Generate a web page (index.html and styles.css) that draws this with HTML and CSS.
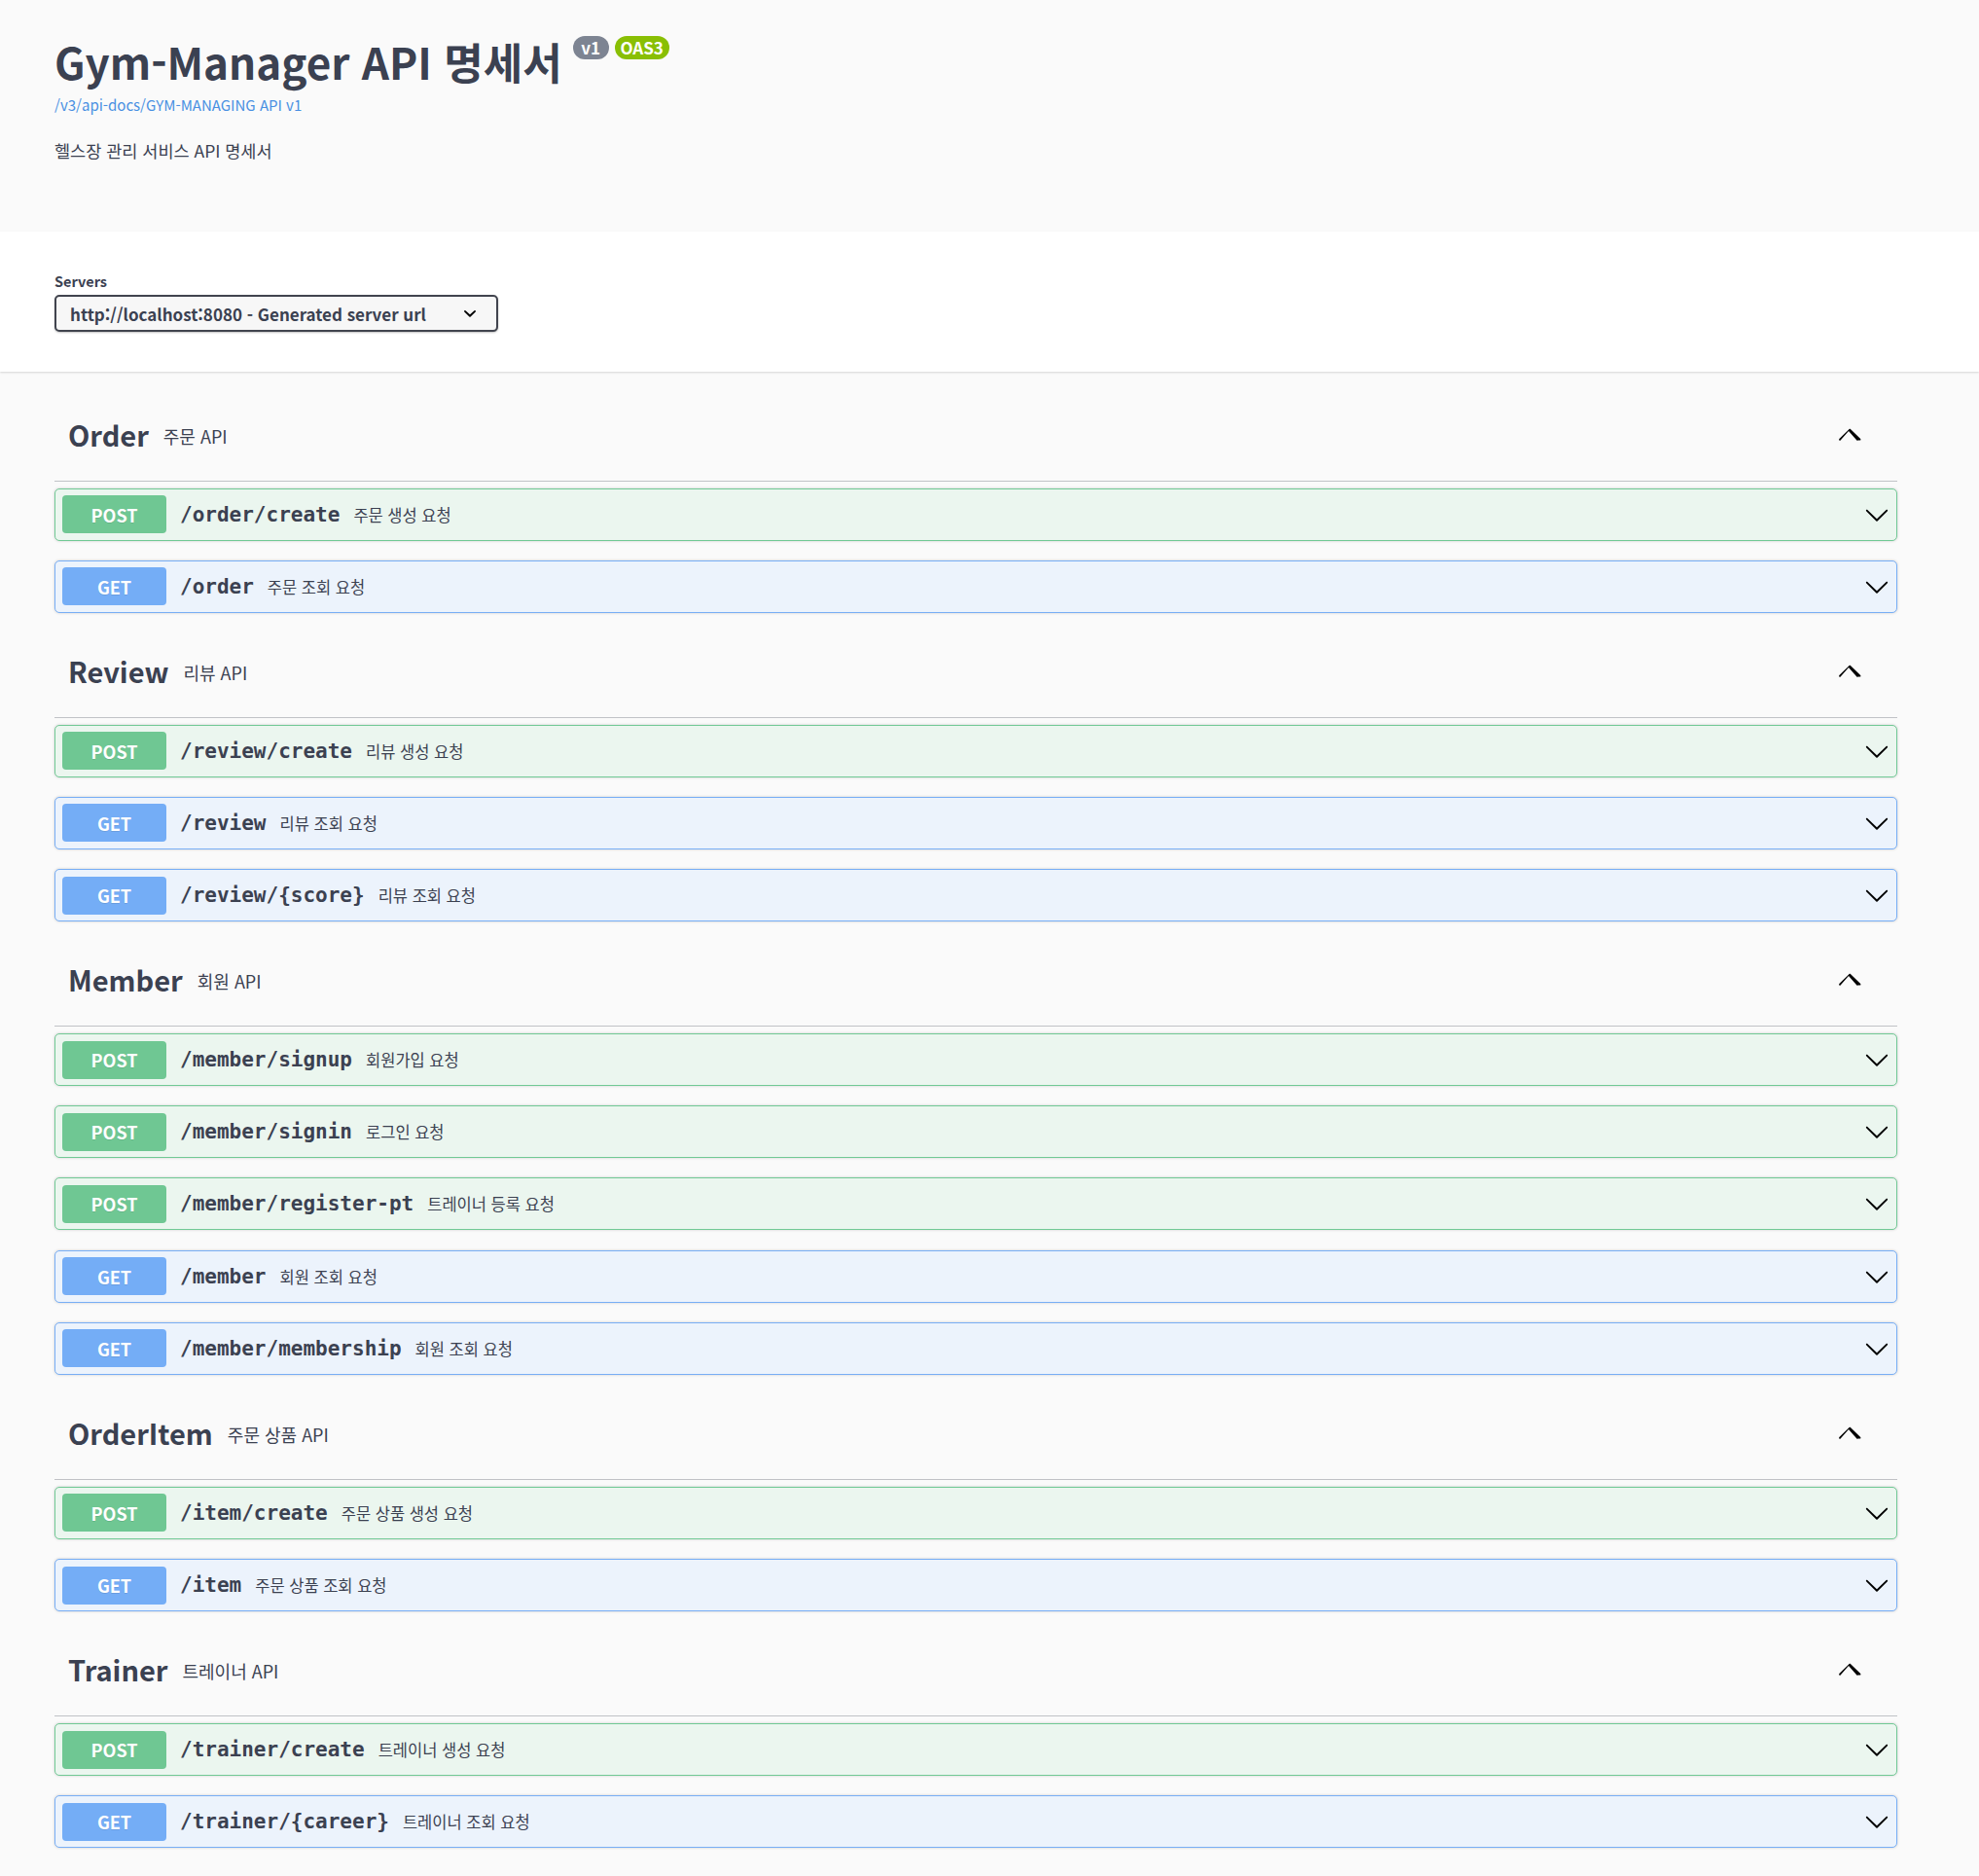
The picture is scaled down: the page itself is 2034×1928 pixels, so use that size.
FILE: index.html
```html
<!DOCTYPE html>
<html lang="ko">
<head>
<meta charset="utf-8">
<title>Gym-Manager API 명세서</title>
<link rel="stylesheet" href="styles.css">
</head>
<body>
<div class="info wrapper">
  <div class="title-row">
    <h2 class="title">Gym-Manager API 명세서</h2>
    <span class="badge ver">v1</span>
    <span class="badge oas">OAS3</span>
  </div>
  <a class="url" href="#">/v3/api-docs/GYM-MANAGING API v1</a>
  <p class="desc">헬스장 관리 서비스 API 명세서</p>
</div>

<div class="scheme">
  <div class="wrapper">
    <div class="servers-label">Servers</div>
    <div class="select">
      <span>http://localhost:8080 - Generated server url</span>
      <svg class="sel-arrow" viewBox="0 0 20 20" width="26" height="26"><path d="M13.418 7.859a.695.695 0 01.978 0 .68.68 0 010 .969l-3.908 3.83a.697.697 0 01-.979 0l-3.908-3.83a.68.68 0 010-.969.695.695 0 01.978 0L10 11l3.418-3.141z"/></svg>
    </div>
  </div>
</div>

<div class="wrapper tags">
  <section class="tag-section">
    <h3 class="tag"><span class="tag-name">Order</span><small>주문 API</small>
      <svg class="up" viewBox="0 0 20 20" width="26" height="26"><path d="M17.418 14.908c-.272.268-.709.268-.979 0L10 7.665l-6.44 7.243c-.27.268-.707.268-.979 0-.27-.268-.27-.701 0-.969l7.908-7.83c.27-.268.707-.268.979 0l7.908 7.83c.27.268.27.701.001.969z"/></svg>
    </h3>
    <div class="opblock post"><span class="method">POST</span><span class="path">/order/create</span><span class="sum">주문 생성 요청</span><svg class="down" viewBox="0 0 20 20" width="26" height="26"><path d="M17.418 6.109c.272-.268.709-.268.979 0s.271.701 0 .969l-7.908 7.83c-.27.268-.707.268-.979 0l-7.908-7.83c-.27-.268-.27-.701 0-.969.271-.268.709-.268.979 0L10 13.25l7.418-7.141z"/></svg></div>
    <div class="opblock get"><span class="method">GET</span><span class="path">/order</span><span class="sum">주문 조회 요청</span><svg class="down" viewBox="0 0 20 20" width="26" height="26"><path d="M17.418 6.109c.272-.268.709-.268.979 0s.271.701 0 .969l-7.908 7.83c-.27.268-.707.268-.979 0l-7.908-7.83c-.27-.268-.27-.701 0-.969.271-.268.709-.268.979 0L10 13.25l7.418-7.141z"/></svg></div>
  </section>

  <section class="tag-section">
    <h3 class="tag"><span class="tag-name">Review</span><small>리뷰 API</small>
      <svg class="up" viewBox="0 0 20 20" width="26" height="26"><path d="M17.418 14.908c-.272.268-.709.268-.979 0L10 7.665l-6.44 7.243c-.27.268-.707.268-.979 0-.27-.268-.27-.701 0-.969l7.908-7.83c.27-.268.707-.268.979 0l7.908 7.83c.27.268.27.701.001.969z"/></svg>
    </h3>
    <div class="opblock post"><span class="method">POST</span><span class="path">/review/create</span><span class="sum">리뷰 생성 요청</span><svg class="down" viewBox="0 0 20 20" width="26" height="26"><path d="M17.418 6.109c.272-.268.709-.268.979 0s.271.701 0 .969l-7.908 7.83c-.27.268-.707.268-.979 0l-7.908-7.83c-.27-.268-.27-.701 0-.969.271-.268.709-.268.979 0L10 13.25l7.418-7.141z"/></svg></div>
    <div class="opblock get"><span class="method">GET</span><span class="path">/review</span><span class="sum">리뷰 조회 요청</span><svg class="down" viewBox="0 0 20 20" width="26" height="26"><path d="M17.418 6.109c.272-.268.709-.268.979 0s.271.701 0 .969l-7.908 7.83c-.27.268-.707.268-.979 0l-7.908-7.83c-.27-.268-.27-.701 0-.969.271-.268.709-.268.979 0L10 13.25l7.418-7.141z"/></svg></div>
    <div class="opblock get"><span class="method">GET</span><span class="path">/review/{score}</span><span class="sum">리뷰 조회 요청</span><svg class="down" viewBox="0 0 20 20" width="26" height="26"><path d="M17.418 6.109c.272-.268.709-.268.979 0s.271.701 0 .969l-7.908 7.83c-.27.268-.707.268-.979 0l-7.908-7.83c-.27-.268-.27-.701 0-.969.271-.268.709-.268.979 0L10 13.25l7.418-7.141z"/></svg></div>
  </section>

  <section class="tag-section">
    <h3 class="tag"><span class="tag-name">Member</span><small>회원 API</small>
      <svg class="up" viewBox="0 0 20 20" width="26" height="26"><path d="M17.418 14.908c-.272.268-.709.268-.979 0L10 7.665l-6.44 7.243c-.27.268-.707.268-.979 0-.27-.268-.27-.701 0-.969l7.908-7.83c.27-.268.707-.268.979 0l7.908 7.83c.27.268.27.701.001.969z"/></svg>
    </h3>
    <div class="opblock post"><span class="method">POST</span><span class="path">/member/signup</span><span class="sum">회원가입 요청</span><svg class="down" viewBox="0 0 20 20" width="26" height="26"><path d="M17.418 6.109c.272-.268.709-.268.979 0s.271.701 0 .969l-7.908 7.83c-.27.268-.707.268-.979 0l-7.908-7.83c-.27-.268-.27-.701 0-.969.271-.268.709-.268.979 0L10 13.25l7.418-7.141z"/></svg></div>
    <div class="opblock post"><span class="method">POST</span><span class="path">/member/signin</span><span class="sum">로그인 요청</span><svg class="down" viewBox="0 0 20 20" width="26" height="26"><path d="M17.418 6.109c.272-.268.709-.268.979 0s.271.701 0 .969l-7.908 7.83c-.27.268-.707.268-.979 0l-7.908-7.83c-.27-.268-.27-.701 0-.969.271-.268.709-.268.979 0L10 13.25l7.418-7.141z"/></svg></div>
    <div class="opblock post"><span class="method">POST</span><span class="path">/member/register-pt</span><span class="sum">트레이너 등록 요청</span><svg class="down" viewBox="0 0 20 20" width="26" height="26"><path d="M17.418 6.109c.272-.268.709-.268.979 0s.271.701 0 .969l-7.908 7.83c-.27.268-.707.268-.979 0l-7.908-7.83c-.27-.268-.27-.701 0-.969.271-.268.709-.268.979 0L10 13.25l7.418-7.141z"/></svg></div>
    <div class="opblock get"><span class="method">GET</span><span class="path">/member</span><span class="sum">회원 조회 요청</span><svg class="down" viewBox="0 0 20 20" width="26" height="26"><path d="M17.418 6.109c.272-.268.709-.268.979 0s.271.701 0 .969l-7.908 7.83c-.27.268-.707.268-.979 0l-7.908-7.83c-.27-.268-.27-.701 0-.969.271-.268.709-.268.979 0L10 13.25l7.418-7.141z"/></svg></div>
    <div class="opblock get"><span class="method">GET</span><span class="path">/member/membership</span><span class="sum">회원 조회 요청</span><svg class="down" viewBox="0 0 20 20" width="26" height="26"><path d="M17.418 6.109c.272-.268.709-.268.979 0s.271.701 0 .969l-7.908 7.83c-.27.268-.707.268-.979 0l-7.908-7.83c-.27-.268-.27-.701 0-.969.271-.268.709-.268.979 0L10 13.25l7.418-7.141z"/></svg></div>
  </section>

  <section class="tag-section">
    <h3 class="tag"><span class="tag-name">OrderItem</span><small>주문 상품 API</small>
      <svg class="up" viewBox="0 0 20 20" width="26" height="26"><path d="M17.418 14.908c-.272.268-.709.268-.979 0L10 7.665l-6.44 7.243c-.27.268-.707.268-.979 0-.27-.268-.27-.701 0-.969l7.908-7.83c.27-.268.707-.268.979 0l7.908 7.83c.27.268.27.701.001.969z"/></svg>
    </h3>
    <div class="opblock post"><span class="method">POST</span><span class="path">/item/create</span><span class="sum">주문 상품 생성 요청</span><svg class="down" viewBox="0 0 20 20" width="26" height="26"><path d="M17.418 6.109c.272-.268.709-.268.979 0s.271.701 0 .969l-7.908 7.83c-.27.268-.707.268-.979 0l-7.908-7.83c-.27-.268-.27-.701 0-.969.271-.268.709-.268.979 0L10 13.25l7.418-7.141z"/></svg></div>
    <div class="opblock get"><span class="method">GET</span><span class="path">/item</span><span class="sum">주문 상품 조회 요청</span><svg class="down" viewBox="0 0 20 20" width="26" height="26"><path d="M17.418 6.109c.272-.268.709-.268.979 0s.271.701 0 .969l-7.908 7.83c-.27.268-.707.268-.979 0l-7.908-7.83c-.27-.268-.27-.701 0-.969.271-.268.709-.268.979 0L10 13.25l7.418-7.141z"/></svg></div>
  </section>

  <section class="tag-section">
    <h3 class="tag"><span class="tag-name">Trainer</span><small>트레이너 API</small>
      <svg class="up" viewBox="0 0 20 20" width="26" height="26"><path d="M17.418 14.908c-.272.268-.709.268-.979 0L10 7.665l-6.44 7.243c-.27.268-.707.268-.979 0-.27-.268-.27-.701 0-.969l7.908-7.83c.27-.268.707-.268.979 0l7.908 7.83c.27.268.27.701.001.969z"/></svg>
    </h3>
    <div class="opblock post"><span class="method">POST</span><span class="path">/trainer/create</span><span class="sum">트레이너 생성 요청</span><svg class="down" viewBox="0 0 20 20" width="26" height="26"><path d="M17.418 6.109c.272-.268.709-.268.979 0s.271.701 0 .969l-7.908 7.83c-.27.268-.707.268-.979 0l-7.908-7.83c-.27-.268-.27-.701 0-.969.271-.268.709-.268.979 0L10 13.25l7.418-7.141z"/></svg></div>
    <div class="opblock get"><span class="method">GET</span><span class="path">/trainer/{career}</span><span class="sum">트레이너 조회 요청</span><svg class="down" viewBox="0 0 20 20" width="26" height="26"><path d="M17.418 6.109c.272-.268.709-.268.979 0s.271.701 0 .969l-7.908 7.83c-.27.268-.707.268-.979 0l-7.908-7.83c-.27-.268-.27-.701 0-.969.271-.268.709-.268.979 0L10 13.25l7.418-7.141z"/></svg></div>
  </section>
</div>
</body>
</html>
```

FILE: styles.css
```css
html, body {
  margin: 0;
  padding: 0;
}
body {
  background: #fafafa;
  color: #3b4151;
  font-family: "Noto Sans CJK KR", "Noto Sans", sans-serif;
}
.wrapper {
  box-sizing: border-box;
  width: 1894px;
  margin-left: 56px;
}

/* header */
.info {
  padding-top: 32px;
  padding-bottom: 70px;
}
.title-row {
  display: flex;
  align-items: flex-start;
}
.title {
  margin: 0;
  font-size: 44px;
  line-height: 62px;
  font-weight: 700;
  color: #3b4151;
}
.badge {
  display: inline-block;
  box-sizing: border-box;
  margin-top: 5px;
  height: 24px;
  line-height: 24px;
  border-radius: 12px;
  font-size: 17px;
  font-weight: 700;
  color: #fff;
  text-align: center;
}
.ver {
  background: #7d8492;
  width: 37px;
  margin-left: 11px;
}
.oas {
  background: #89bf04;
  width: 56px;
  margin-left: 6px;
}
.url {
  display: block;
  margin-top: 2px;
  font-size: 15px;
  line-height: 24px;
  color: #4990e2;
  text-decoration: none;
}
.desc {
  margin: 22px 0 0;
  font-size: 17.5px;
  line-height: 26px;
}

/* servers */
.scheme {
  background: #fff;
  box-shadow: 0 1px 2px 0 rgba(0, 0, 0, .15);
  padding: 40px 0 41px;
}
.servers-label {
  font-size: 14.5px;
  font-weight: 700;
  line-height: 22px;
}
.select {
  box-sizing: border-box;
  display: flex;
  align-items: center;
  width: 456px;
  height: 38px;
  margin-top: 3px;
  padding: 0 14px 0 14px;
  border: 2px solid #41444e;
  border-radius: 5px;
  background: #f7f7f7;
  box-shadow: 0 1px 2px 0 rgba(0, 0, 0, .25);
  font-size: 17px;
  font-weight: 700;
}
.sel-arrow {
  margin-left: auto;
  fill: #000;
}

/* tags */
.tags {
  padding-top: 24.5px;
  padding-bottom: 20px;
}
.tag {
  box-sizing: border-box;
  display: flex;
  align-items: center;
  height: 88px;
  margin: 0 0 7px;
  padding: 0 37px 9px 14px;
  border-bottom: 1px solid rgba(59, 65, 81, .3);
  font-weight: 400;
}
.tag-name {
  font-size: 29px;
  font-weight: 700;
}
.tag small {
  font-size: 18px;
  padding: 0 15px;
  margin-top: 4px;
}
.up {
  margin-left: auto;
  fill: #000;
}

.opblock {
  box-sizing: border-box;
  display: flex;
  align-items: center;
  height: 54px;
  margin: 0 0 20.15px;
  padding: 0 7px;
  border: 1px solid;
  border-radius: 5px;
  box-shadow: 0 0 3px rgba(0, 0, 0, .19);
}
.post {
  background: #ebf6ef;
  border-color: #71c995;
}
.get {
  background: #ecf3fc;
  border-color: #78aef5;
}
.method {
  display: flex;
  align-items: center;
  justify-content: center;
  width: 107px;
  height: 39px;
  border-radius: 4px;
  color: #fff;
  font-size: 18px;
  font-weight: 700;
  text-shadow: 0 1px 0 rgba(0, 0, 0, .1);
}
.post .method {
  background: #6fc793;
}
.get .method {
  background: #74adf6;
}
.path {
  padding: 0 14px;
  font-family: "DejaVu Sans Mono", monospace;
  font-size: 21px;
  font-weight: 700;
  color: #3b4151;
}
.sum {
  font-size: 16.5px;
  color: #3b4151;
}
.down {
  margin-left: auto;
  fill: #000;
}
```
